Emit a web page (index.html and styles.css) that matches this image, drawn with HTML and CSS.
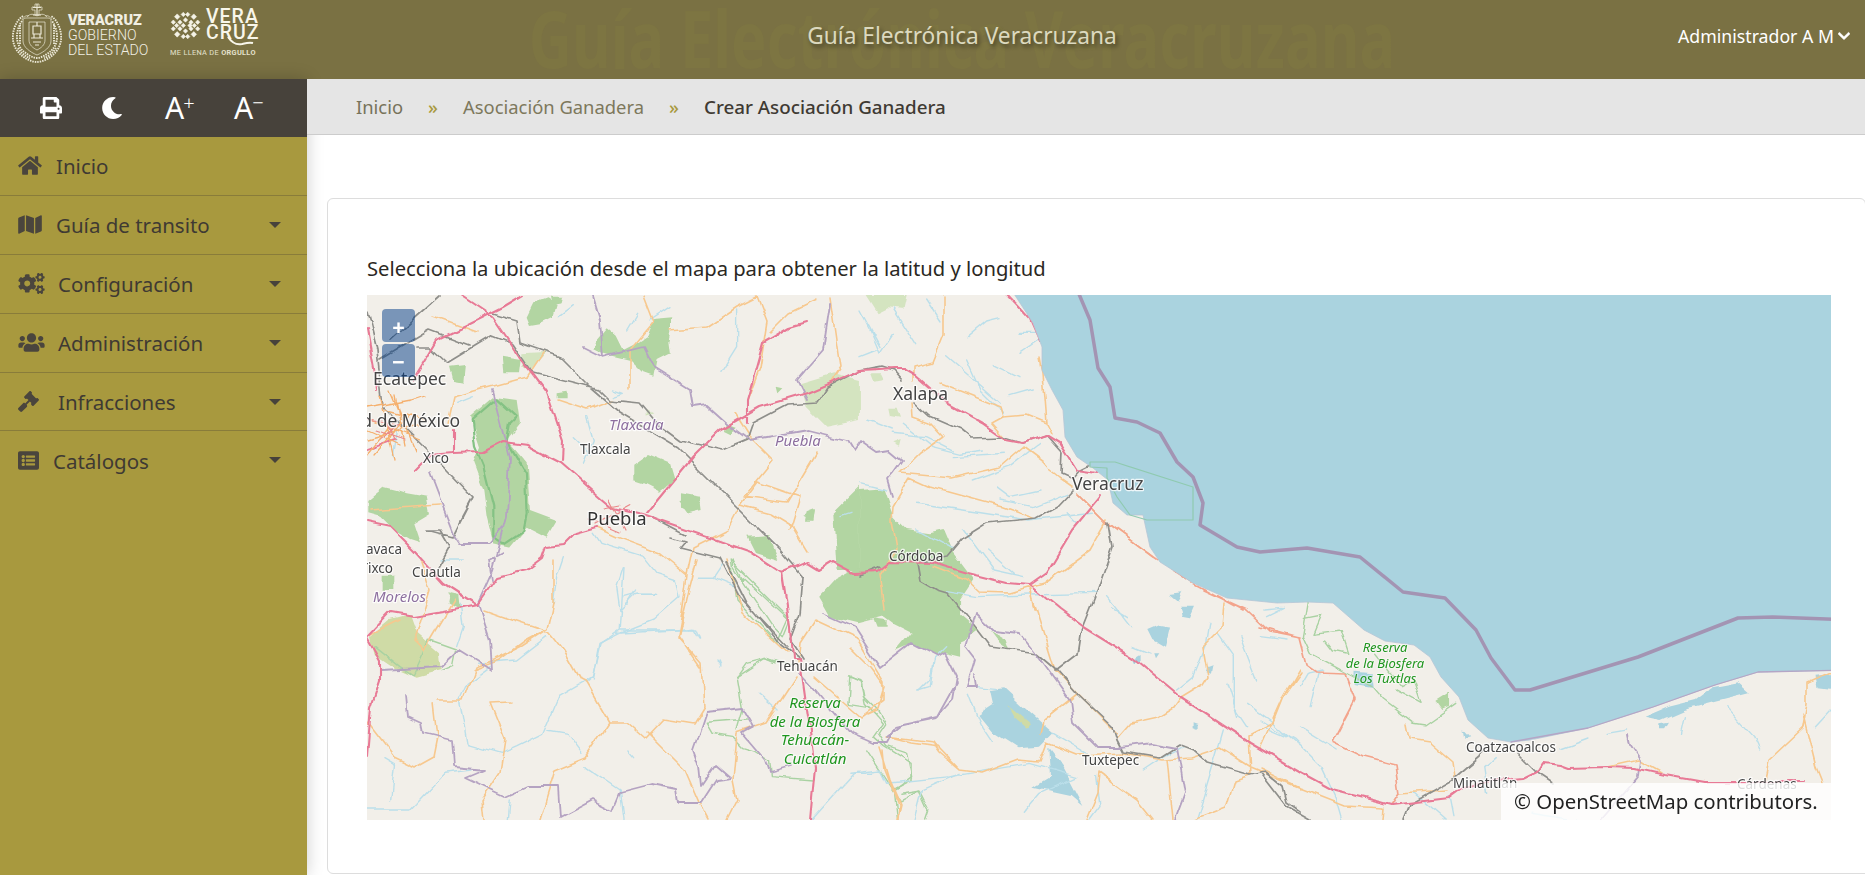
FILE: index.html
```html
<!DOCTYPE html>
<html lang="es">
<head>
<meta charset="utf-8">
<title>Guía Electrónica Veracruzana</title>
<link rel="stylesheet" href="styles.css">
</head>
<body>
<header class="topbar">
  <div class="brand">
    <svg class="crest" viewBox="0 0 50 60" aria-hidden="true">
      <path class="cr-thick" d="M25 1v11M21 4.500h8M21 12h8"/>
      <path class="cr" d="M23 1h4v3h3v3h-3v5h-4V7h-3V4h3z"/>
      <path class="cr" d="M15 14c3-4 7-3 10-1 3-2 7-3 10 1M10 17c2-4 5-5 7-4M40 17c-2-4-5-5-7-4"/>
      <path class="cr-dash" d="M11 13C5 17 2 24 1 31c-1 8 2 15 7 20 4 4 11 8 17 8s13-4 17-8c5-5 8-12 7-20-1-7-4-14-10-18"/>
      <path class="cr-dash" d="M10 18C7 22 5.500 27 5 32c-.5 7 2 12 6 16 4 3 9 7 14 7s10-4 14-7c4-4 6.500-9 6-16-.5-5-2-10-5-14"/>
      <path class="cr" d="M14 15h22c2 0 3 1 3 3v20c0 6-7 11-14 14-7-3-14-8-14-14V18c0-2 1-3 3-3z"/>
      <path class="cr" d="M17 19h16v18c0 5-4 8-8 10-4-2-8-5-8-10z"/>
      <path class="cr-thick" d="M21 23h8v8h-8zM19 35h12M22 31v4M28 31v4M21 39h8M23 42h4M25 19v4"/>
      <path class="cr-dash" d="M6 45c3 5 8 9 12 10M44 45c-3 5-8 9-12 10M8 22v20M42 22v20"/>
    </svg>
    <div class="gov">
      <strong class="gov-b">VERACRUZ</strong>
      <span class="gov-l">GOBIERNO</span>
      <span class="gov-l">DEL ESTADO</span>
    </div>
    <div class="vera">
      <div class="vera-top">
        <svg class="knot" viewBox="0 0 28 28" aria-hidden="true">
          <path class="knot-p" d="M4 6l2.500-2.500L9 6 6.500 8.500zM10 4l2-2 2 2-2 2zM14 4l2-2 2 2-2 2zM19 6l2.500-2.500L24 6l-2.500 2.500zM1 11l2-2 2 2-2 2zM7 11l2-2 2 2-2 2zM12 9l2-2 2 2-2 2zM17 11l2-2 2 2-2 2zM23 11l2-2 2 2-2 2zM4 14l2-2 2 2-2 2zM10 14l2-2 2 2-2 2zM16 14l2-2 2 2-2 2zM20 14l2-2 2 2-2 2zM1 17l2-2 2 2-2 2zM7 17l2-2 2 2-2 2zM12 19l2-2 2 2-2 2zM17 17l2-2 2 2-2 2zM23 17l2-2 2 2-2 2zM4 22l2.500-2.500L9 22l-2.500 2.500zM10 24l2-2 2 2-2 2zM14 24l2-2 2 2-2 2zM19 22l2.500-2.500L24 22l-2.500 2.500z"/>
        </svg>
        <div class="vera-word">
          <span class="vera-line">VERA</span>
          <span class="vera-line">CRUZ</span>
          <svg class="swoosh" viewBox="0 0 30 10" aria-hidden="true"><path class="swoosh-p" d="M2 1c4 6 9 8 14 7 4-1 7-2 11-1"/></svg>
        </div>
      </div>
      <div class="vera-tag">ME LLENA DE <b>ORGULLO</b></div>
    </div>
  </div>
  <div class="title">
    <span class="title-ghost" aria-hidden="true">Guía Electrónica Veracruzana</span>
    <span class="title-text">Guía Electrónica Veracruzana</span>
  </div>
  <div class="user">
    <span>Administrador A M</span>
    <svg class="chev" viewBox="0 0 448 512" aria-hidden="true"><path d="M207.029 381.476L12.686 187.132c-9.373-9.373-9.373-24.569 0-33.941l22.667-22.667c9.357-9.357 24.522-9.375 33.901-.04L224 284.505l154.745-154.021c9.379-9.335 24.544-9.317 33.901.04l22.667 22.667c9.373 9.373 9.373 24.569 0 33.941L240.971 381.476c-9.373 9.372-24.569 9.372-33.942 0z"/></svg>
  </div>
</header>

<div class="shell">
  <aside class="sidebar">
    <div class="tools">
      <svg class="tool-ic" viewBox="0 0 512 512" aria-hidden="true"><path d="M448 192V77.25c0-8.49-3.37-16.62-9.37-22.63L393.37 9.37c-6-6-14.14-9.37-22.63-9.37H96C78.33 0 64 14.33 64 32v160c-35.35 0-64 28.65-64 64v112c0 8.84 7.16 16 16 16h48v96c0 17.67 14.33 32 32 32h320c17.67 0 32-14.33 32-32v-96h48c8.84 0 16-7.16 16-16V256c0-35.35-28.65-64-64-64zm-64 256H128v-96h256v96zm0-224H128V64h192v48c0 8.84 7.16 16 16 16h48v96zm48 72c-13.25 0-24-10.75-24-24 0-13.26 10.75-24 24-24s24 10.74 24 24c0 13.25-10.75 24-24 24z"/></svg>
      <svg class="tool-ic" viewBox="0 0 512 512" aria-hidden="true"><path d="M283.211 512c78.962 0 151.079-35.925 198.857-94.792 7.068-8.708-.639-21.43-11.562-19.35-124.203 23.654-238.262-71.576-238.262-196.954 0-72.222 38.662-138.635 101.498-174.394 9.686-5.512 7.25-20.197-3.756-22.23A258.156 258.156 0 0 0 283.211 0c-141.309 0-256 114.511-256 256 0 141.309 114.511 256 256 256z"/></svg>
      <span class="tool-a">A<sup class="tool-sup">+</sup></span>
      <span class="tool-a">A<sup class="tool-sup">−</sup></span>
    </div>
    <nav class="menu">
      <a class="item"><svg class="ic" viewBox="0 0 576 512" aria-hidden="true"><path d="M280.37 148.26L96 300.11V464a16 16 0 0 0 16 16l112.06-.29a16 16 0 0 0 15.92-16V368a16 16 0 0 1 16-16h64a16 16 0 0 1 16 16v95.64a16 16 0 0 0 16 16.05L464 480a16 16 0 0 0 16-16V300L295.67 148.26a12.19 12.19 0 0 0-15.3 0zM571.6 251.47L488 182.56V44.05a12 12 0 0 0-12-12h-56a12 12 0 0 0-12 12v72.61L318.47 43a48 48 0 0 0-61 0L4.34 251.47a12 12 0 0 0-1.6 16.9l25.5 31A12 12 0 0 0 45.15 301l235.22-193.74a12.19 12.19 0 0 1 15.3 0L530.9 301a12 12 0 0 0 16.9-1.6l25.500-31a12 12 0 0 0-1.7-16.93z"/></svg><span class="lbl l56">Inicio</span></a>
      <a class="item"><svg class="ic" viewBox="0 0 576 512" aria-hidden="true"><path d="M0 117.66v346.32c0 11.32 11.43 19.06 21.94 14.86L160 416V32L20.12 87.95A32.006 32.006 0 0 0 0 117.66zM192 416l192 64V96L192 32v384zM554.06 33.16L416 96v384l139.88-55.95A31.996 31.996 0 0 0 576 394.34V48.02c0-11.32-11.43-19.06-21.94-14.86z"/></svg><span class="lbl l56">Guía de transito</span><i class="caret"></i></a>
      <a class="item"><svg class="ic ic-w" viewBox="0 0 640 512" aria-hidden="true"><path d="M512.1 191l-8.2 14.3c-3 5.3-9.4 7.5-15.1 5.4-11.8-4.4-22.6-10.7-32.1-18.6-4.6-3.8-5.8-10.5-2.8-15.7l8.2-14.3c-6.9-8-12.3-17.3-15.9-27.4h-16.5c-6 0-11.2-4.3-12.2-10.3-2-12-2.1-24.6 0-37.1 1-6 6.2-10.4 12.2-10.4h16.5c3.6-10.1 9-19.4 15.9-27.4l-8.2-14.3c-3-5.2-1.9-11.9 2.8-15.7 9.5-7.9 20.4-14.2 32.1-18.6 5.7-2.1 12.1.1 15.1 5.4l8.2 14.3c10.5-1.9 21.2-1.9 31.7 0L552 6.3c3-5.3 9.4-7.5 15.1-5.4 11.8 4.4 22.6 10.7 32.1 18.6 4.6 3.8 5.8 10.5 2.8 15.7l-8.2 14.3c6.9 8 12.3 17.3 15.9 27.4h16.5c6 0 11.2 4.3 12.2 10.3 2 12 2.1 24.6 0 37.1-1 6-6.2 10.4-12.2 10.4h-16.5c-3.6 10.1-9 19.4-15.9 27.4l8.2 14.3c3 5.2 1.9 11.9-2.8 15.7-9.5 7.9-20.4 14.2-32.1 18.6-5.7 2.1-12.1-.1-15.1-5.4l-8.2-14.3c-10.4 1.9-21.2 1.9-31.7 0zm-10.5-58.8c38.5 29.6 82.4-14.3 52.8-52.8-38.5-29.7-82.4 14.3-52.8 52.8zM386.3 286.1l33.7 16.8c10.1 5.8 14.5 18.1 10.5 29.1-8.9 24.2-26.4 46.4-42.6 65.8-7.4 8.9-20.2 11.1-30.3 5.3l-29.1-16.8c-16 13.7-34.6 24.6-54.9 31.7v33.6c0 11.6-8.3 21.6-19.7 23.6-24.6 4.2-50.4 4.4-75.9 0-11.5-2-20-11.9-20-23.6V418c-20.3-7.2-38.9-18-54.9-31.7L74 403c-10 5.8-22.9 3.6-30.3-5.3-16.2-19.4-33.3-41.6-42.2-65.7-4-10.9.4-23.2 10.5-29.1l33.3-16.8c-3.9-20.9-3.9-42.4 0-63.4L12 205.8c-10.1-5.8-14.6-18.1-10.5-29 8.9-24.2 26-46.4 42.2-65.8 7.4-8.9 20.2-11.1 30.3-5.3l29.1 16.8c16-13.7 34.6-24.6 54.9-31.7V57.1c0-11.5 8.2-21.5 19.6-23.5 24.6-4.2 50.5-4.4 76-.1 11.5 2 20 11.9 20 23.6v33.6c20.3 7.2 38.9 18 54.9 31.7l29.1-16.8c10-5.8 22.9-3.6 30.3 5.3 16.2 19.4 33.2 41.6 42.1 65.8 4 10.9.1 23.2-10 29.1l-33.7 16.8c3.9 21 3.9 42.5 0 63.5zm-117.6 21.1c59.2-77-28.7-164.9-105.7-105.7-59.2 77 28.7 164.9 105.7 105.7zm243.4 182.7l-8.2 14.3c-3 5.3-9.4 7.5-15.1 5.4-11.8-4.4-22.6-10.7-32.1-18.6-4.6-3.8-5.8-10.5-2.8-15.7l8.2-14.3c-6.9-8-12.3-17.3-15.9-27.4h-16.5c-6 0-11.2-4.3-12.2-10.3-2-12-2.1-24.6 0-37.1 1-6 6.2-10.4 12.2-10.4h16.5c3.6-10.1 9-19.4 15.9-27.4l-8.2-14.3c-3-5.2-1.9-11.9 2.8-15.7 9.5-7.9 20.4-14.2 32.1-18.6 5.7-2.1 12.1.1 15.1 5.4l8.2 14.3c10.5-1.9 21.2-1.9 31.7 0l8.2-14.3c3-5.3 9.4-7.5 15.1-5.4 11.8 4.4 22.6 10.7 32.1 18.6 4.6 3.8 5.8 10.5 2.8 15.7l-8.2 14.3c6.9 8 12.3 17.3 15.9 27.4h16.5c6 0 11.2 4.3 12.2 10.3 2 12 2.1 24.6 0 37.1-1 6-6.2 10.4-12.2 10.4h-16.5c-3.6 10.1-9 19.4-15.9 27.4l8.2 14.3c3 5.2 1.9 11.9-2.8 15.7-9.5 7.9-20.4 14.2-32.1 18.6-5.7 2.1-12.1-.1-15.1-5.4l-8.2-14.3c-10.4 1.9-21.2 1.9-31.7 0zM501.6 431c38.5 29.6 82.4-14.3 52.8-52.8-38.5-29.6-82.4 14.3-52.8 52.8z"/></svg><span class="lbl l58">Configuración</span><i class="caret"></i></a>
      <a class="item"><svg class="ic ic-w" viewBox="0 0 640 512" aria-hidden="true"><path d="M96 224c35.3 0 64-28.7 64-64s-28.7-64-64-64-64 28.7-64 64 28.7 64 64 64zm448 0c35.3 0 64-28.7 64-64s-28.7-64-64-64-64 28.7-64 64 28.7 64 64 64zm32 32h-64c-17.6 0-33.500 7.100-45.100 18.600 40.300 22.100 68.900 62 75.100 109.400h66c17.700 0 32-14.300 32-32v-32c0-35.300-28.700-64-64-64zm-256 0c61.900 0 112-50.100 112-112S381.900 32 320 32 208 82.100 208 144s50.100 112 112 112zm76.800 32h-8.300c-20.800 10-43.900 16-68.500 16s-47.600-6-68.500-16h-8.300C179.600 288 128 339.600 128 403.200V432c0 26.500 21.500 48 48 48h288c26.500 0 48-21.500 48-48v-28.800c0-63.600-51.600-115.200-115.200-115.200zm-223.700-13.400C161.500 263.100 145.600 256 128 256H64c-35.300 0-64 28.700-64 64v32c0 17.700 14.300 32 32 32h65.900c6.300-47.400 34.900-87.300 75.200-109.400z"/></svg><span class="lbl l58">Administración</span><i class="caret"></i></a>
      <a class="item"><svg class="ic ic-n" viewBox="0 0 512 512" aria-hidden="true"><path d="M504.971 199.362l-22.627-22.627c-9.373-9.373-24.569-9.373-33.941 0l-5.657 5.657L329.608 69.255l5.657-5.657c9.373-9.373 9.373-24.569 0-33.941L312.638 7.029c-9.373-9.373-24.569-9.373-33.941 0L154.246 131.480c-9.373 9.373-9.373 24.569 0 33.941l22.627 22.627c9.373 9.373 24.569 9.373 33.941 0l5.657-5.657 39.598 39.598-81.040 81.040-5.657-5.657c-12.497-12.497-32.758-12.497-45.255 0L9.373 412.118c-12.497 12.497-12.497 32.758 0 45.255l45.255 45.255c12.497 12.497 32.758 12.497 45.255 0l114.745-114.745c12.497-12.497 12.497-32.758 0-45.255l-5.657-5.657 81.040-81.040 39.598 39.598-5.657 5.657c-9.373 9.373-9.373 24.569 0 33.941l22.627 22.627c9.373 9.373 24.569 9.373 33.941 0l124.451-124.451c9.372-9.372 9.372-24.568 0-33.941z"/></svg><span class="lbl l58">Infracciones</span><i class="caret"></i></a>
      <a class="item item-last"><svg class="ic ic-n" viewBox="0 0 512 512" aria-hidden="true"><path d="M464 480H48c-26.510 0-48-21.490-48-48V80c0-26.510 21.490-48 48-48h416c26.510 0 48 21.490 48 48v352c0 26.510-21.490 48-48 48zM128 120c-22.091 0-40 17.909-40 40s17.909 40 40 40 40-17.909 40-40-17.909-40-40-40zm0 96c-22.091 0-40 17.909-40 40s17.909 40 40 40 40-17.909 40-40-17.909-40-40-40zm0 96c-22.091 0-40 17.909-40 40s17.909 40 40 40 40-17.909 40-40-17.909-40-40-40zm288-136v-32c0-6.627-5.373-12-12-12H204c-6.627 0-12 5.373-12 12v32c0 6.627 5.373 12 12 12h200c6.627 0 12-5.373 12-12zm0 96v-32c0-6.627-5.373-12-12-12H204c-6.627 0-12 5.373-12 12v32c0 6.627 5.373 12 12 12h200c6.627 0 12-5.373 12-12zm0 96v-32c0-6.627-5.373-12-12-12H204c-6.627 0-12 5.373-12 12v32c0 6.627 5.373 12 12 12h200c6.627 0 12-5.373 12-12z"/></svg><span class="lbl l53">Catálogos</span><i class="caret"></i></a>
    </nav>
  </aside>

  <main class="content">
    <nav class="crumbs">
      <a class="crumb c1">Inicio</a>
      <span class="sep">»</span>
      <a class="crumb c2">Asociación Ganadera</a>
      <span class="sep">»</span>
      <span class="crumb cur">Crear Asociación Ganadera</span>
    </nav>
    <section class="card">
      <p class="hint">Selecciona la ubicación desde el mapa para obtener la latitud y longitud</p>
      <div class="map">
        <svg class="map-svg" viewBox="367 295 1464 525" aria-hidden="true">
          <defs>
            <filter id="rough" filterUnits="userSpaceOnUse" x="340" y="270" width="1520" height="570" color-interpolation-filters="sRGB">
              <feTurbulence type="fractalNoise" baseFrequency=".045" numOctaves="2" seed="4" result="n"/>
              <feDisplacementMap in="SourceGraphic" in2="n" scale="8" xChannelSelector="R" yChannelSelector="G"/>
              <feGaussianBlur stdDeviation=".55"/>
            </filter>
            <filter id="soft" filterUnits="userSpaceOnUse" x="340" y="270" width="1520" height="570" color-interpolation-filters="sRGB">
              <feGaussianBlur stdDeviation=".55"/>
            </filter>
          </defs>
          <rect class="land" x="367" y="295" width="1464" height="525"/>
          <g class="tiles" filter="url(#rough)">
            <g transform="translate(360,250) scale(.3333)">
              <path class="forest" d="M500 200L520 160 560 145 590 165 580 200 540 220 510 225zM710 270L740 235 770 260 790 300 830 280 860 260 880 210 940 205 925 270 930 310 890 330 880 380 850 370 810 330 770 320 730 310 700 295zM330 500L400 440 470 450 480 520 440 570 500 640 510 780 590 810 560 860 500 830 450 890 400 880 380 800 370 720 340 640 360 590zM820 650L870 615 930 640 945 690 900 725 850 700 820 690zM425 320L485 330 480 370 430 370zM270 350L315 345 310 395 280 390zM1420 790L1500 710 1500 960 1430 960zM1330 800L1365 785 1360 815zM960 730L1020 740 1000 780 960 770zM590 430L620 425 620 445 590 445zM570 140L610 140 605 160 575 165zM1100 520L1130 530 1115 550 1095 540zM1250 410L1270 415 1255 430zM1450 430L1480 430 1465 450z"/>
              <path class="forest-light" d="M1320 400L1420 370 1500 390 1500 510 1400 530 1340 470zM490 310L560 305 510 360 490 350zM860 480L880 490 860 500z"/>
              <path class="park" d="M335 510L410 445 470 500 450 520 440 575 495 670 500 790 490 840 430 880 400 860 400 770 370 650 345 590z"/>
            </g>
            <g transform="translate(360,480) scale(.3333)">
              <path class="forest" d="M22 60L70 20 110 30 140 40 200 50 210 100 160 130 180 190 150 180 100 150 60 110 22 100zM1165 170L1225 165 1255 240 1190 220zM270 340L295 345 300 390 265 370zM1340 100L1365 90 1360 125 1335 125zM955 60L1020 50 1025 90 985 100zM65 290L100 290 100 330 65 330z"/>
              <path class="scrub" d="M90 420L150 405 170 460 240 520 245 570 170 590 100 560 40 520 30 470z"/>
              <path class="reserve" d="M45 500L120 560 160 585 190 520 205 480 290 510 280 560 245 575M1120 240L1150 300 1150 290 1290 420 1270 470 1240 440 1120 260zM1130 590L1215 535 1290 560"/>
            </g>
            <g transform="translate(360,560) scale(.3827,.3333)">
              <path class="forest" d="M1200 110L1240 60 1290 30 1370 0 1568 0 1568 290 1530 280 1510 290 1440 250 1400 270 1450 200 1400 160 1300 190 1230 170z"/>
              <path class="forest" d="M228 100L250 105 262 150 240 135z"/>
              <path class="reserve" d="M985 510L1000 450 985 350 1010 310 1060 295 1090 310M1015 480L905 490 920 520 975 530 1000 560 1030 570 1070 600 1075 650 1185 660M1275 350L1310 370 1320 430 1365 490 1340 530 1370 560 1440 610 1440 660 1390 690 1410 720 1460 690 1480 740M1280 350L1275 430 1330 440M970 0L1120 170 1090 250 985 120z"/>
            </g>
            <g transform="translate(860,290) scale(.3333)">
              <path class="forest" d="M0 600L70 595 100 680 140 720 210 730 250 720 280 790 340 870 280 960 0 960z"/>
              <path class="forest-light" d="M30 250L60 250 70 270 40 275zM85 350L110 350 120 380 90 375zM100 460L125 450 120 470zM15 15L140 15 130 60 80 55 50 70z"/>
            </g>
            <g transform="translate(850,590) scale(.3333)">
              <path class="forest" d="M0 0L280 0 310 60 380 120 340 150 290 170 270 200 200 160 190 130 130 100 90 70 60 90 0 90zM70 85L110 90 110 110 80 110zM420 120L470 150 480 180 450 160z"/>
              <path class="reserve" d="M0 265L30 275 40 320 80 360 105 400 85 430 110 470 170 490 185 560 130 600M150 610L210 600 240 660 230 690M50 480L70 510 130 600 140 690"/>
              <path class="lake" d="M385 375L430 345 420 300 460 295 520 350 610 430 590 450 570 470 500 475 430 430zM595 470L640 530 700 645 665 615 620 605 550 590 600 560zM850 210L875 195 875 215 855 220zM895 120L930 105 960 110 945 170 910 150zM990 50L1035 50 1020 85 995 80zM960 15L1000 10 985 35zM1070 225L1085 220 1080 245 1065 240zM1025 400L1040 405 1040 420 1025 415zM910 190L925 190 915 205z"/>
              <path class="scrub" d="M475 345L540 400 530 410 495 380z"/>
            </g>
            <g transform="translate(1260,560) scale(.3858,.3333)">
              <path class="lake" d="M1000 470L1060 440 1130 420 1170 385 1240 370 1270 400 1200 420 1100 450 1040 480zM1035 490L1060 485 1050 505 1035 505zM1440 350L1480 345 1480 390 1445 385zM245 335L290 340 295 385 245 375zM525 510L545 535 530 540z"/>
              <path class="forest" d="M455 425L490 400 490 440 470 450z"/>
              <path class="reserve" d="M125 125L110 230 130 280 290 380 320 420 400 490 430 495 510 430M115 175L160 165 140 220 210 210 230 280 190 270 170 240M355 390L420 430 400 360 370 380 300 280"/>
            </g>
            <g transform="translate(860,290) scale(.3333)"><path class="river" d="M30 120L60 190 100 130M0 60L60 170M320 140L380 90 420 80M260 200L330 260 420 340M320 210L360 300 430 370M130 400L220 470 300 490 370 480M100 430L200 440 280 480M280 500L430 490M340 570L450 530 540 460M410 590L450 620 540 600M420 630L520 650 620 610M170 640L310 660 500 690 700 670M0 580L80 600M310 720L400 840 490 860M380 780L460 850M170 720L280 780M620 670L650 700M400 220L480 260M480 190L540 150M450 320L520 300M480 130L540 130M200 30L240 90M100 60L170 170M0 200L50 180M20 390L100 420"/></g>
            <g transform="translate(360,250) scale(.3333)"><path class="river" d="M1080 370L1130 290 1130 180M680 500L700 570 670 640M760 420L790 430 760 440M600 200L640 170M870 210L930 170M290 460L340 440M120 500L100 620M830 190L800 240M640 560L690 610M1440 800L1470 790"/></g>
            <g transform="translate(360,480) scale(.3333)"><path class="river" d="M700 160L720 190 770 205 850 230 890 280 950 300 960 350 880 420 780 460 720 490 700 600M790 260L770 320 780 390 830 340 880 340M770 460L940 450 1000 445 1020 480M1015 295L1060 295 1090 250M1060 295L1120 320M610 230L590 290 580 370M350 550L470 540 560 470M300 370L310 440 290 500M240 240L310 240M1075 540L1080 555"/></g>
            <g transform="translate(360,560) scale(.3827,.3333)"><path class="river" d="M690 20L680 210 630 250 610 350 520 410 480 520 410 560 370 580 280 550 260 420 280 370 340 320M680 210L800 210 880 210 890 240M600 360L590 370M490 510L540 520 580 580M590 620L680 690 690 780M20 750L130 750 220 640 290 630M60 590L90 610 80 720M1040 400L1090 450M1180 780L1290 640 1340 640M385 780L390 720M930 300L940 310M700 570L715 590M1450 780L1470 690 1568 640M1500 300L1490 380 1460 390M690 110L720 100 770 100M700 130L720 90"/></g>
            <g transform="translate(850,590) scale(.3333)"><path class="river" d="M290 5L380 20 540 15 740 10M770 20L840 110M780 50L830 80M290 170L250 210 240 270 210 300M355 310L390 400 430 460M380 290L440 295M610 430L720 495M0 550L90 540 110 580 300 560 540 520 680 560M680 560L570 610 520 670M740 560L750 650 720 690M1080 100L1070 160 1030 260 980 300M1100 130L1150 200 1150 350 1190 410M1170 140L1220 270M1190 340L1260 390 1350 470M1120 420L1100 490 1040 690M880 540L940 500 1000 470M850 170L900 190M1250 80L1300 55M1130 280L1160 380M1240 410L1310 440"/></g>
            <g transform="translate(1260,560) scale(.3858,.3333)"><path class="river" d="M0 230L70 240M10 150L55 145M0 480L90 540 160 620 200 720 215 780M100 380L120 340 160 330M100 500L200 570M400 700L480 780M610 590L580 620 590 700M780 570L850 540M900 520L950 510M1100 470L1090 520M1210 440L1280 530 1295 570M1480 450L1440 500M490 710L500 770M700 760L820 780M150 340L130 440"/></g>
            <path class="road" d="M943 297L943 337 933 362 913 367 913 380M940 383L1000 407 1003 417 992 423 1007 440M1003 417L1027 415 1047 423 1043 373 1040 357M1047 423L1052 433M912 403L913 417 930 423 943 437 920 453 900 473 953 478 1000 467 1023 447 1043 462 1050 470 1060 478 1073 487M910 478L930 487 977 500 1003 507 1033 518M910 478L893 507 892 520 897 550 880 575 885 610M1077 493L1107 523 1153 557M1107 520L1090 550 1044 583 1010 593 980 592 967 580 933 567M1030 585L1035 610M1030 590L1055 670 1117 733M1077 693L1043 720 1040 735M1047 743L1077 755 1123 753 1163 760 1190 758 1220 748 1250 767 1300 788M850 647L870 667 885 687 878 710 867 715M887 737L933 743 940 753 960 770 983 773 1017 760 1040 762 1047 743M1117 738L1130 723 1157 717 1173 707 1180 697 1203 683 1208 675 1203 647 1223 627 1225 603M1248 735L1250 775 1235 780 1227 807 1193 820M1248 735L1273 722 1283 697 1300 673M1167 760L1173 820M1100 773L1137 800 1153 820M1100 773L1098 793 1087 820M883 750L885 770 898 803 897 820M1407 725L1410 740 1430 743 1453 763 1455 778M1260 768L1299 787 1345 805 1383 807 1382 820M1283 697L1299 670M1260 748L1283 697M1831 673L1808 683 1808 703 1804 727 1769 760 1765 780M1804 715L1817 767 1823 782M1607 767L1638 760 1661 773M1399 793L1449 790M553 560L553 603 547 630 523 643 500 660 473 670M483 610L503 617 533 627 550 633 563 650 580 680 586 683 609 723 586 757 555 770 540 820M609 723L628 723 645 738 662 720 693 725 704 707 701 663 678 637 689 590 697 560M647 732L685 770 701 807 708 820M737 733L733 780 737 800 727 820M737 733L766 723 796 677M815 677L838 697 861 717 884 700 884 683 858 640 815 620 800 643 798 663M888 737L911 743 938 747 960 770M880 747L890 780 900 803 896 820M463 700L475 667 494 660 521 647 547 630M437 700L463 700M433 703L437 737 433 757 415 767 394 757 368 723M490 703L505 740 500 773 482 800 484 820M490 703L513 702M597 528L617 537 660 553 687 575 682 613 678 635 700 667M687 575L693 547 727 530 740 505 757 482M740 505L770 513 793 527 807 550M727 560L743 613 787 653M757 482L800 497 790 530M543 353L527 377 453 397 447 423M433 317L477 333M557 400L587 410 612 400M630 390L630 350 653 323 643 297M707 327L737 307 757 297 767 323 760 367 747 400M670 330L707 327M830 297L840 367 827 387M817 300L790 313 770 333M773 460L750 437 735 413M817 453L787 503 743 497 773 460M420 560L430 590 415 640 425 650 455 600M370 635L400 620M370 510L440 505"/>
            <path class="road-hi" d="M1077 493L1107 523 1153 557 1193 583 1243 610M1203 590L1247 610 1270 632 1300 638M1260 627L1299 638 1306 665 1316 672 1345 673 1355 700 1333 742 1364 757 1395 765 1399 793 1391 805"/>
            <path class="rail" d="M415 347L430 347 447 363 493 335 513 343 533 373 573 383 600 390 610 400 640 403 657 423 680 440 723 450 747 440 753 423 787 405 817 403 827 387 860 370 880 366 893 370 902 380M493 313L517 320 520 343 560 357 590 387 620 413 677 447 737 507 780 550 803 577 800 613 790 640 803 660M915 403L930 417 960 430 970 438 1003 437 1023 443 1047 435 1063 453 1062 473 1073 478 1080 470 1090 465M1073 490L1057 507 1037 518 987 523 963 538 947 557 917 563 920 580 937 590 947 593 977 630 990 647 1037 653 1057 670 1077 693 1113 727 1117 740 1123 752 1160 758 1180 745 1193 750 1208 763 1250 775 1265 772 1283 787 1287 803 1300 812M1097 590L1080 633 1077 653 1055 670M1108 523L1112 547 1097 590M1260 772L1287 807 1310 820M1403 820L1409 805 1453 780 1480 757 1484 750M1518 753L1538 773 1553 783M880 567L860 575M670 538L685 542 680 548 720 558 740 597 787 647M653 518L685 535M427 530L440 530 450 547 438 568M367 310L377 350 383 407 427 450 473 498 453 537 427 530M473 498L460 522M727 563L747 603 781 645 800 660M390 340L440 295M380 360L430 330 470 345"/>
            <path class="state" d="M593 297L600 320 603 357 643 347 653 367 690 390 693 407 707 405 727 423 750 440 807 430 847 440 853 450 860 440 877 452 890 450 902 460 893 473 887 480 892 497M583 347L603 357M830 303L823 350 797 380 807 400M493 390L510 457 507 517 493 570 478 603 490 640 492 670M503 528L490 543 460 543 453 533 430 473M503 553L490 560 493 580M442 667L460 650 492 670M380 670L442 667M406 697L408 717 421 723 423 733 452 740 454 767 484 770 465 778 505 797 528 787 559 787 561 817 593 800 613 810 620 793 651 785 676 790 678 803 701 803 716 780 731 778 716 765 701 787 699 767 693 750 701 727 706 712 743 708 754 727 743 733 766 760 770 773 792 767M800 673L813 687 850 733 873 743 888 743 896 727 938 717 957 683M823 613L854 627 880 667 911 643 938 657 945 653 957 677 953 700 937 718 903 725 888 737M975 613L993 630 1020 633 1040 658 1070 700 1073 723 1097 747 1120 747 1150 743 1177 748 1185 793 1175 820M975 613L965 647 975 660 967 687 977 687 975 675M1628 735L1630 745 1640 760 1638 775 1600 820"/>
            <path class="mway" d="M483 452L503 442 527 445 560 462 600 497 613 508 643 515 707 537 750 552 782 573 807 562 820 570 833 562 854 573 877 572 890 562 933 563 967 573 1007 583 1030 585 1060 610 1083 627 1133 658 1180 697 1250 743 1300 772 1333 790 1391 805 1449 798 1464 787 1499 780 1522 778 1538 770 1542 763 1561 765 1569 768 1607 767 1634 768 1665 775 1704 782 1738 782 1804 782M1030 585L1047 573 1073 530 1102 495M860 370L807 393 760 407 720 430 693 457 647 513M860 370L893 368 903 368 915 375 947 403 983 423 1007 440 1023 443 1047 435 1060 443 1077 470 1097 473M1007 295L1030 320 1040 343M747 423L747 400 763 343 790 327 807 322M460 295L493 317 520 357 547 393 563 440 562 460M413 380L437 340 503 307 523 295M597 528L573 535 563 545 547 547 543 558 527 570 497 577 477 605 443 583 413 550 390 527 367 522M477 605L443 612 413 617 390 613 367 637 380 660 380 680 371 707 367 757M782 573L790 627 792 660 800 660 815 767 810 820M453 453L483 452M453 430L453 453 430 455 415 470M367 330L378 390M367 450L395 440"/>
            <path class="city" d="M367 408L410 400 425 395M370 420L420 440M380 395L395 460M367 440L420 425M375 455L410 415M390 390L415 450M367 430L400 445M385 410L425 420M395 395L405 445M367 455L395 420"/>
            <path class="city-r" d="M367 420L400 425M385 420L395 440M375 430L405 440M380 440L400 425M605 508L620 505M595 525L632 505M610 500L625 530M587 518L620 532"/>
          </g>
          <g class="tiles" filter="url(#soft)">
            <path class="sea" d="M1005 280L1033 323 1042 347 1042 370 1052 390 1063 410 1065 437 1077 457 1093 468 1108 480 1113 503 1127 515 1143 515 1150 547 1160 562 1193 583 1227 598 1277 603 1308 602 1333 603 1364 630 1385 641 1414 645 1430 657 1441 677 1459 697 1468 720 1488 738 1511 742 1530 740 1588 728 1653 707 1715 685 1758 672 1850 670 1850 280z"/>
            <path class="coast-state" d="M1511 742L1588 728 1653 707 1715 685 1758 672 1850 670"/>
            <path class="reserve sea-park" d="M1090 462L1115 462 1193 487 1193 520 1147 520 1130 515 1117 497 1107 478 1107 468 1090 467z"/>
            <path class="mbound" d="M1073 280L1090 320 1098 368 1110 387 1115 418 1137 422 1160 433 1177 462 1193 477 1203 503 1200 525 1237 547 1260 552 1307 548 1360 557 1403 592 1445 598 1476 630 1491 658 1515 690 1530 690 1638 657 1738 618 1773 617 1850 620"/>
          </g>
          <g class="labels">
            <text class="t t-lg" x="373" y="385">Ecatepec</text>
            <text class="t t-lg t-end" x="460" y="427">Ciudad de México</text>
            <text class="t t-lg" x="893" y="400">Xalapa</text>
            <text class="t t-lg" x="1072" y="490">Veracruz</text>
            <text class="t t-xl" x="587" y="525">Puebla</text>
            <text class="t t-sm" x="580" y="454">Tlaxcala</text>
            <text class="t t-sm" x="423" y="463">Xico</text>
            <text class="t t-sm t-end" x="402" y="554">Cuernavaca</text>
            <text class="t t-sm t-end" x="393" y="573">Tixco</text>
            <text class="t t-sm" x="412" y="577">Cuautla</text>
            <text class="t t-sm" x="889" y="561">Córdoba</text>
            <text class="t t-sm" x="777" y="671">Tehuacán</text>
            <text class="t t-sm" x="1082" y="765">Tuxtepec</text>
            <text class="t t-sm" x="1466" y="752">Coatzacoalcos</text>
            <text class="t t-sm" x="1453" y="788">Minatitlán</text>
            <text class="t t-sm" x="1737" y="789">Cárdenas</text>
            <text class="t t-st" x="609" y="430">Tlaxcala</text>
            <text class="t t-st" x="775" y="446">Puebla</text>
            <text class="t t-st" x="373" y="602">Morelos</text>
            <text class="t t-gr" x="815" y="708">Reserva</text>
            <text class="t t-gr" x="815" y="727">de la Biosfera</text>
            <text class="t t-gr" x="815" y="745">Tehuacán-</text>
            <text class="t t-gr" x="815" y="764">Cuicatlán</text>
            <text class="t t-gs" x="1385" y="652">Reserva</text>
            <text class="t t-gs" x="1385" y="668">de la Biosfera</text>
            <text class="t t-gs" x="1385" y="683">Los Tuxtlas</text>
          </g>
        </svg>
        <div class="zoom">
          <button class="zbtn">+</button>
          <button class="zbtn">−</button>
        </div>
        <div class="attrib">© OpenStreetMap contributors.</div>
      </div>
    </section>
  </main>
</div>
</body>
</html>
```

FILE: styles.css
```css
* { box-sizing: border-box; }
html, body { height: 100%; }
body {
  margin: 0;
  overflow: hidden;
  background: #fff;
  color: #3a3630;
  font-family: "Noto Sans", "Open Sans", sans-serif;
}

/* header */
.topbar {
  height: 79px;
  background: #7a7143;
  display: flex;
  align-items: center;
  overflow: hidden;
}
.brand { width: 260px; height: 79px; display: flex; padding-left: 12px; flex: none; }
.crest { width: 50px; height: 60px; margin-top: 3px; flex: none; }
.cr, .cr-thick, .cr-dash { fill: none; stroke: #ebe8d6; }
.cr { stroke-width: .7; }
.cr-thick { stroke-width: 1.200; }
.cr-dash { stroke-width: 1.900; stroke-dasharray: 1.500 1; }
.gov { margin: 13px 0 0 6px; width: 88px; font-family: Roboto, sans-serif; color: #f1efe3; display: flex; flex-direction: column; font-size: 14.200px; line-height: 15px; flex: none; }
.gov-b { font-weight: 900; font-size: 14.400px; }
.gov-l { font-weight: 300; }
.vera { margin: 7px 0 0 14px; width: 90px; flex: none; }
.vera-top { display: flex; gap: 5px; }
.knot { width: 31px; height: 31px; margin-top: 3px; flex: none; }
.knot-p { fill: #f4f2e6; stroke: #f4f2e6; stroke-width: .5; }
.vera-word { position: relative; font-family: Roboto, sans-serif; font-weight: 500; color: #f8f6ea; font-size: 19.500px; line-height: 16px; letter-spacing: 1px; display: flex; flex-direction: column; padding-top: 2px; }
.swoosh { position: absolute; left: 20px; top: 29px; width: 30px; height: 10px; }
.swoosh-p { fill: none; stroke: #f8f6ea; stroke-width: 2; }
.vera-tag { font-family: Roboto, sans-serif; font-size: 7.400px; letter-spacing: .3px; color: #e4e1cd; margin-top: 7px; white-space: nowrap; }
.title { flex: 1; position: relative; display: flex; justify-content: center; margin-right: 14px; height: 79px; align-items: center; padding-bottom: 8px; }
.title-ghost { position: absolute; left: 50%; top: -7px; transform: translateX(-50%) scaleX(.765); font-size: 78px; font-weight: 700; white-space: nowrap; color: #7d7542; line-height: 90px; }
.title-text { position: relative; color: #dcd9bf; font-size: 22.700px; text-shadow: 2px 3px 4px rgba(0,0,0,.45); white-space: nowrap; }
.user { flex: none; width: 187px; display: flex; align-items: center; gap: 4px; color: #fff; font-size: 17.700px; padding-bottom: 8px; white-space: nowrap; }
.chev { width: 12px; height: 14px; fill: #fff; stroke: #fff; stroke-width: 20; margin-top: 1px; flex: none; }

/* shell */
.shell { display: flex; height: 796px; }
.sidebar { width: 307px; flex: none; background: #a8993e; box-shadow: 0 0 16px rgba(0,0,0,.2); position: relative; display: flex; flex-direction: column; }
.tools { height: 58px; background: #47423b; display: grid; grid-template-columns: 40px 22px 39px 22px 42px 30px 39px 30px; color: #fff; align-items: center; }
.tool-ic { width: 22px; height: 22px; fill: #fff; }
.tools .tool-ic:nth-child(1) { grid-column: 2; }
.tools .tool-ic:nth-child(2) { grid-column: 4; }
.tools .tool-a:nth-child(3) { grid-column: 6; }
.tools .tool-a:nth-child(4) { grid-column: 8; }
.tool-a { font-size: 30px; line-height: 30px; white-space: nowrap; }
.tool-sup { font-size: 20px; line-height: 0; vertical-align: 9px; margin-left: -1px; font-weight: 300; }
.menu { display: flex; flex-direction: column; }
.item { height: 58.900px; display: flex; align-items: center; border-bottom: 1px solid rgba(70,65,50,.32); color: #3f3a33; position: relative; padding-left: 18px; }
.item-last { border-bottom: 0; }
.ic { width: 24px; height: 21px; fill: #4a453d; flex: none; }
.ic-w { width: 27px; }
.ic-n { width: 21px; }
.lbl { font-size: 20.500px; position: absolute; white-space: nowrap; }
.l56 { left: 56px; }
.l58 { left: 58px; }
.l53 { left: 53px; }
.caret { position: absolute; left: 269px; top: 26px; border-left: 6px solid transparent; border-right: 6px solid transparent; border-top: 6px solid #47423b; }

/* content */
.content { flex: 1; min-width: 0; display: flex; flex-direction: column; }
.crumbs { height: 56px; background: #e5e5e5; border-bottom: 1px solid #ccc; display: flex; align-items: center; padding: 0 0 0 49px; font-size: 18.400px; position: relative; z-index: 1; }
.crumb { white-space: nowrap; }
.c1 { color: #77735a; }
.c2 { color: #7d785c; }
.cur { color: #3f3a33; font-weight: 500; font-size: 18.800px; }
.sep { color: #a8993e; margin: 0 25px; font-weight: 500; }
.card { margin: 63px -1px 0 20px; height: 676px; border: 1px solid #ddd; border-radius: 6px 6px 0 6px; padding: 0 34px 0 39px; }
.hint { margin: 0; padding-top: 56px; height: 96px; font-size: 20.200px; line-height: 26px; color: #2b2823; white-space: nowrap; }
.map { position: relative; height: 525px; overflow: hidden; background: #f2efe9; }
.map-svg { display: block; width: 100%; height: 525px; }

/* map */
.land { fill: #f2efe9; }
.tiles path { fill: none; stroke-linejoin: round; stroke-linecap: round; vector-effect: non-scaling-stroke; }
.tiles .forest { fill: #b2d5a2; }
.tiles .forest-light { fill: #d4e4c0; }
.tiles .scrub { fill: #cfdba6; }
.tiles .lake { fill: #aad3df; }
.tiles .sea { fill: #aad3df; stroke: #b5c5d5; stroke-width: .8; }
.tiles .park { stroke: #84c284; stroke-width: 2.200; }
.tiles .reserve { stroke: #a9d2a2; stroke-width: 1.400; }
.tiles .sea-park { stroke: #8fcab0; stroke-width: 1.200; }
.tiles .river { stroke: #bbdfea; stroke-width: 1.400; }
.tiles .road { stroke: #f7c88e; stroke-width: 1.600; }
.tiles .road-hi { stroke: #f3a48c; stroke-width: 1.700; }
.tiles .rail { stroke: #8f8f8b; stroke-width: 1.700; }
.tiles .state { stroke: #b5a3c2; stroke-width: 1.800; }
.tiles .mway { stroke: #e87a96; stroke-width: 2.100; }
.tiles .city { stroke: #f5b06e; stroke-width: 1.300; }
.tiles .city-r { stroke: #ea8a8a; stroke-width: 1.200; }
.tiles .coast-state { stroke: #b4a6c6; stroke-width: 1.300; }
.tiles .mbound { stroke: #a394b3; stroke-width: 3.500; }
.t { font-family: "Noto Sans", sans-serif; fill: #444; paint-order: stroke; stroke: rgba(255,255,255,.8); stroke-width: 2.500px; stroke-linejoin: round; }
.t-end { text-anchor: end; }
.t-lg { font-size: 17.500px; }
.t-xl { font-size: 18.500px; fill: #333; }
.t-sm { font-size: 13.500px; }
.t-st { font-size: 15px; font-style: italic; fill: #8d6f9f; }
.t-gr { font-size: 15px; font-style: italic; fill: #1f961f; text-anchor: middle; stroke: rgba(255,255,255,.55); }
.t-gs { font-size: 13px; font-style: italic; fill: #1f961f; text-anchor: middle; stroke: rgba(255,255,255,.4); }
.zoom { position: absolute; left: 15px; top: 14px; display: flex; flex-direction: column; gap: 2px; }
.zbtn { width: 33px; height: 33px; padding: 0; border: 0; border-radius: 4px; background: rgba(0,60,136,.5); color: #fff; font: 700 22px/30px "Noto Sans", sans-serif; }
.attrib { position: absolute; right: 0; bottom: 0; height: 37px; width: 330px; background: rgba(255,255,255,.82); color: #222; font-size: 20.400px; line-height: 37px; padding-left: 13px; white-space: nowrap; }
```
